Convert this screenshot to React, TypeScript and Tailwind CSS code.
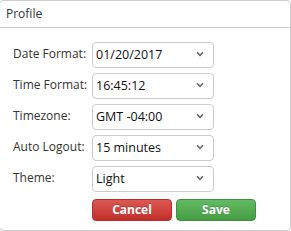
import React, { useState } from 'react';

const fieldDefs = [
  { label: 'Date Format:', options: ['01/20/2017', '2017-01-20', '20.01.2017'] },
  { label: 'Time Format:', options: ['16:45:12', '4:45:12 PM'] },
  { label: 'Timezone:', options: ['GMT -04:00', 'GMT -05:00', 'GMT +00:00'] },
  { label: 'Auto Logout:', options: ['15 minutes', '30 minutes', '1 hour'] },
  { label: 'Theme:', options: ['Light', 'Dark'] },
];

const Chevron = () => (
  <svg
    className="pointer-events-none absolute right-[10px] top-1/2 -translate-y-1/2"
    width="8"
    height="6"
    viewBox="0 0 8 6"
  >
    <path d="M1 1.2 L4 4.4 L7 1.2" fill="none" stroke="#666" strokeWidth="1.6" />
  </svg>
);

const App = () => {
  const [values, setValues] = useState<string[]>(fieldDefs.map(f => f.options[0]));

  return (
    <div className="w-[291px] h-[231px] bg-white overflow-hidden" style={{ fontFamily: '"Open Sans", "Liberation Sans", sans-serif' }}>
      <div className="-ml-px w-[292px] h-[231px] border border-[#cccccc] rounded-[4px] flex flex-col">
        <div className="h-[27px] border-b border-[#cccccc] px-[6px] flex items-center text-[12px] text-[#333]">
          Profile
        </div>
        <div className="pt-[13px] pl-[13px] flex flex-col gap-[5px]">
          {fieldDefs.map((f, i) => (
            <div key={f.label} className="flex items-center">
              <label className="w-[79px] shrink-0 whitespace-nowrap text-[12px] text-[#333]">{f.label}</label>
              <div className="relative w-[122px] h-[26px] shrink-0">
                <select
                  className="w-full h-full appearance-none border border-[#cccccc] rounded-[4px] bg-white pl-[3px] text-[12.5px] text-[#111] outline-none"
                  value={values[i]}
                  onChange={e => {
                    const next = [...values];
                    next[i] = e.target.value;
                    setValues(next);
                  }}
                >
                  {f.options.map(o => (
                    <option key={o}>{o}</option>
                  ))}
                </select>
                <Chevron />
              </div>
            </div>
          ))}
          <div className="flex gap-[4px] pl-[79px] mt-[3px]">
            <button className="w-[80px] h-[22px] rounded-[4px] border border-[#b92c28] bg-gradient-to-b from-[#dc5853] to-[#c12e2a] text-white text-[12px] font-bold [text-shadow:0_-1px_0_rgba(0,0,0,0.2)]">
              Cancel
            </button>
            <button className="w-[80px] h-[22px] rounded-[4px] border border-[#3e8f3e] bg-gradient-to-b from-[#62bb62] to-[#449c44] text-white text-[12px] font-bold [text-shadow:0_-1px_0_rgba(0,0,0,0.2)]">
              Save
            </button>
          </div>
        </div>
      </div>
    </div>
  );
};

export default App;
